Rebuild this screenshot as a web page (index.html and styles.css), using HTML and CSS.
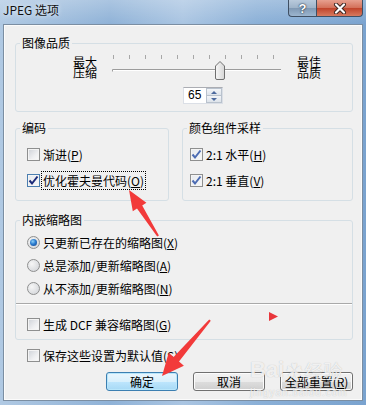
FILE: index.html
```html
<!DOCTYPE html>
<html lang="zh-CN">
<head>
  <meta charset="UTF-8">
  <meta name="viewport" content="width=device-width, initial-scale=1.0">
  <title>JPEG 选项</title>
  <link rel="stylesheet" href="styles.css">
</head>
<body>
  <div class="window">
    <div class="titlebar">
      <span class="title">JPEG 选项</span>
      <div class="caption-buttons">
        <span class="cap-btn help">?</span>
        <span class="cap-btn close">
          <svg width="14" height="11" viewBox="0 0 14 11">
            <path d="M3 1.5 L11 9.5 M11 1.5 L3 9.5" stroke="#3a2420" stroke-width="4" stroke-linecap="round"/>
            <path d="M3 1.5 L11 9.5 M11 1.5 L3 9.5" stroke="#fff" stroke-width="2.2" stroke-linecap="round"/>
          </svg>
        </span>
      </div>
    </div>

    <div class="client">
      <!-- 图像品质 -->
      <fieldset class="group">
        <legend>图像品质</legend>
        <div class="group-body quality-body">
          <div class="slider-row">
            <div class="slider-label">最大<br>压缩</div>
            <svg class="slider" width="170" height="26" viewBox="0 0 170 26">
              <g stroke="#a7a7a7" stroke-width="1">
                <path d="M1.5 1 V5 M17.5 1 V5 M33.5 1 V5 M49.5 1 V5 M65.5 1 V5 M81.5 1 V5 M97.5 1 V5 M113.5 1 V5 M129.5 1 V5 M145.5 1 V5 M161.5 1 V5"/>
              </g>
              <path d="M0.5 17.5 V15.5 H169" stroke="#9c9c9c" fill="none"/>
              <path d="M1 16.5 H169" stroke="#ffffff"/>
              <defs>
                <linearGradient id="thumb" x1="0" y1="0" x2="1" y2="0">
                  <stop offset="0" stop-color="#f7f7f7"/>
                  <stop offset="1" stop-color="#d6d6d6"/>
                </linearGradient>
              </defs>
              <path d="M103.5 24 V12 L108 7.5 L112.5 12 V24 Q112.5 25.5 111 25.5 H105 Q103.5 25.5 103.5 24 Z" fill="url(#thumb)" stroke="#6f6f6f"/>
            </svg>
            <div class="slider-label">最佳<br>品质</div>
          </div>
          <div class="spinbox">
            <span class="spin-value">65</span>
            <span class="spin-buttons">
              <span class="spin-btn"><span class="arrow-up"></span></span>
              <span class="spin-btn"><span class="arrow-down"></span></span>
            </span>
          </div>
        </div>
      </fieldset>

      <div class="group-row">
        <!-- 编码 -->
        <fieldset class="group encoding">
          <legend>编码</legend>
          <div class="group-body option-list">
            <div class="option">
              <span class="check"></span>
              <span class="text">渐进(<u>P</u>)</span>
            </div>
            <div class="option">
              <span class="check checked focused">
                <svg width="11" height="11" viewBox="0 0 11 11"><path d="M1.5 5.5 L4 8.5 L9.5 1.5" stroke="#1c2a78" stroke-width="2" fill="none"/></svg>
              </span>
              <span class="text focus-rect">优化霍夫曼代码(<u>O</u>)</span>
            </div>
          </div>
        </fieldset>

        <!-- 颜色组件采样 -->
        <fieldset class="group sampling">
          <legend>颜色组件采样</legend>
          <div class="group-body option-list">
            <div class="option">
              <span class="check checked">
                <svg width="11" height="11" viewBox="0 0 11 11"><path d="M1.5 5.5 L4 8.5 L9.5 1.5" stroke="#4c6cb3" stroke-width="2" fill="none"/></svg>
              </span>
              <span class="text">2:1 水平(<u>H</u>)</span>
            </div>
            <div class="option">
              <span class="check checked">
                <svg width="11" height="11" viewBox="0 0 11 11"><path d="M1.5 5.5 L4 8.5 L9.5 1.5" stroke="#4c6cb3" stroke-width="2" fill="none"/></svg>
              </span>
              <span class="text">2:1 垂直(<u>V</u>)</span>
            </div>
          </div>
        </fieldset>
      </div>

      <!-- 内嵌缩略图 -->
      <fieldset class="group thumbs">
        <legend>内嵌缩略图</legend>
        <div class="group-body radio-list">
          <div class="option">
            <span class="radio selected"></span>
            <span class="text">只更新已存在的缩略图(<u>X</u>)</span>
          </div>
          <div class="option">
            <span class="radio"></span>
            <span class="text">总是添加/更新缩略图(<u>A</u>)</span>
          </div>
          <div class="option">
            <span class="radio"></span>
            <span class="text">从不添加/更新缩略图(<u>N</u>)</span>
          </div>
        </div>
        <div class="separator"></div>
        <div class="group-body dcf-body">
          <div class="option">
            <span class="check"></span>
            <span class="text">生成 DCF 兼容缩略图(<u>G</u>)</span>
          </div>
        </div>
      </fieldset>

      <div class="option save-option">
        <span class="check"></span>
        <span class="text">保存这些设置为默认值(<u>S</u>)</span>
      </div>

      <div class="button-row">
        <button class="btn default">确定</button>
        <button class="btn">取消</button>
        <button class="btn wide">全部重置(<u>R</u>)</button>
      </div>
    </div>

    <!-- watermark and annotations drawn over the dialog -->
    <div class="watermark">
      <div class="wm-main"><span class="wm-bai">Bai</span><span class="wm-paw">✿</span><span class="wm-jy">经验</span></div>
      <div class="wm-url">jingyan.baidu.com</div>
    </div>
    <svg class="annotations" width="366" height="405" viewBox="0 0 366 405">
      <polygon points="129,190 146.4,202.8 142.2,205.4 158.9,235.5 157.2,236.5 137,208.6 132.8,211.2" fill="#f23a3a"/>
      <polygon points="162,376 168.7,352.8 173.6,357 209.2,319.4 210.8,320.7 179,361.6 183.9,365.8" fill="#f23a3a"/>
      <polygon points="269,312 278,316.5 269,321" fill="#e8363c"/>
    </svg>
  </div>
</body>
</html>
```

FILE: styles.css
```css
body {
  margin: 0;
  background: #8fb2d6;
  font-family: "Noto Sans CJK SC", "Liberation Sans", sans-serif;
  font-size: 12px;
  color: #000;
}

.window {
  position: relative;
  width: 366px;
  height: 405px;
  display: flex;
  flex-direction: column;
  overflow: hidden;
  background: linear-gradient(90deg, #b0c9e3 0%, #8fb2d7 30%, #aac5e2 50%, #8bb0d7 70%, #7aa3cf 100%);
}

/* barra de titulo */
.titlebar {
  height: 24px;
  flex-shrink: 0;
  display: flex;
  align-items: flex-start;
  background: linear-gradient(rgba(255, 255, 255, 0.25), rgba(255, 255, 255, 0));
}

.title {
  padding: 2px 0 0 3px;
  line-height: 16px;
  color: #111;
  text-shadow: 0 0 5px rgba(255, 255, 255, 0.9);
}

.caption-buttons {
  margin-left: auto;
  margin-right: 3px;
  display: flex;
}

.cap-btn {
  box-sizing: border-box;
  height: 17px;
  display: flex;
  align-items: center;
  justify-content: center;
  border: 1px solid #3f4f63;
  border-top: none;
}

.help {
  width: 28px;
  border-right: none;
  border-radius: 0 0 0 4px;
  background: linear-gradient(#b9cadc 0%, #9eb3c9 50%, #7f98b3 51%, #9cb5cf 100%);
  color: #fff;
  font-family: "Liberation Sans", sans-serif;
  font-weight: bold;
  font-size: 13px;
  text-shadow: 0 0 2px #1d2c3e, 0 0 1px #1d2c3e;
}

.close {
  width: 47px;
  border-radius: 0 0 4px 0;
  background: linear-gradient(#e7a08f 0%, #d36f58 50%, #c0432a 51%, #d77a5f 100%);
}

/* area de cliente */
.client {
  box-sizing: border-box;
  height: 377px;
  margin: 0 3px;
  padding: 11px 9px 0 11px;
  border: 1px solid #7b8ea2;
  background: #f0f0f0;
  box-shadow: inset 0 0 0 1px #fbfbfb;
}

.group {
  margin: 0;
  padding: 0;
  min-width: 0;
  border: 1px solid #d5dfe5;
  border-radius: 3px;
}

.group legend {
  margin-left: 4px;
  padding: 0 2px;
  line-height: 14px;
}

.quality-body {
  padding: 4px 0 7px 57px;
}

.slider-row {
  display: flex;
  align-items: center;
  gap: 15px;
  height: 26px;
}

.slider-label {
  width: 24px;
  line-height: 11px;
}

.slider {
  display: block;
}

.spinbox {
  box-sizing: border-box;
  width: 40px;
  height: 17px;
  margin: 7px 0 0 110px;
  display: flex;
  background: #fff;
  border: 1px solid #dbdfe6;
  border-top-color: #abadb3;
}

.spin-value {
  padding-left: 4px;
  line-height: 15px;
  font-family: "Liberation Sans", sans-serif;
  font-size: 12px;
}

.spin-buttons {
  margin-left: auto;
  width: 16px;
  display: flex;
  flex-direction: column;
}

.spin-btn {
  flex: 1;
  display: flex;
  align-items: center;
  justify-content: center;
  border: 1px solid #b9c2cd;
  background: linear-gradient(#f3f5f8, #dde3ea);
}

.spin-btn + .spin-btn {
  border-top: none;
}

.arrow-up {
  border-left: 3px solid transparent;
  border-right: 3px solid transparent;
  border-bottom: 3px solid #4d6a9e;
}

.arrow-down {
  border-left: 3px solid transparent;
  border-right: 3px solid transparent;
  border-top: 3px solid #4d6a9e;
}

.group-row {
  display: flex;
  gap: 13px;
  margin-top: 9px;
}

.encoding {
  width: 154px;
  box-sizing: border-box;
}

.sampling {
  flex: 1;
}

.option-list {
  padding: 9px 0 10px 11px;
  display: flex;
  flex-direction: column;
  gap: 6px;
}

.sampling .option-list {
  padding-left: 7px;
}

.option {
  height: 20px;
  display: flex;
  align-items: center;
}

.option .text {
  margin-left: 3px;
  line-height: 17px;
  white-space: nowrap;
}

.option .focus-rect {
  margin-left: 1px;
  padding: 0 1px;
  border: 1px dotted #000;
}

/* casillas */
.check {
  box-sizing: border-box;
  width: 13px;
  height: 13px;
  flex-shrink: 0;
  border: 1px solid #8e8f8f;
  background: linear-gradient(135deg, #cdd1d7 0%, #eeeff1 60%, #fbfbfb 100%);
  box-shadow: inset 0 0 0 1px #f4f4f4;
}

.check.checked {
  background: linear-gradient(135deg, #e6e9ee 0%, #f7f8f9 100%);
}

.check.focused {
  border-color: #4a7eb0;
}

.check svg {
  display: block;
}

.radio {
  box-sizing: border-box;
  width: 13px;
  height: 13px;
  flex-shrink: 0;
  border-radius: 50%;
  border: 1px solid #8e8f8f;
  background: radial-gradient(circle at 35% 35%, #f6f6f6 0%, #dadcdf 70%, #cfd1d4 100%);
  display: flex;
  align-items: center;
  justify-content: center;
}

.radio.selected::after {
  content: "";
  width: 7px;
  height: 7px;
  border-radius: 50%;
  background: radial-gradient(circle at 40% 35%, #8fd1f7 0%, #2a7cd0 45%, #153f86 100%);
}

.thumbs {
  margin-top: 12px;
}

.radio-list {
  padding: 5px 0 5px 11px;
  display: flex;
  flex-direction: column;
  gap: 3px;
}

.separator {
  height: 1px;
  background: #a9a9a9;
  border-bottom: 1px solid #ffffff;
}

.dcf-body {
  padding: 9px 0 5px 11px;
}

.save-option {
  margin: 5px 0 0 12px;
}

/* botones */
.button-row {
  display: flex;
  justify-content: flex-end;
  gap: 15px;
  margin-top: 7px;
}

.btn {
  box-sizing: border-box;
  width: 72px;
  height: 19px;
  padding: 0;
  font: inherit;
  line-height: 17px;
  color: #000;
  border: 1px solid #707070;
  border-radius: 3px;
  background: linear-gradient(#f2f2f2 0%, #ebebeb 50%, #dddddd 51%, #cfcfcf 100%);
  box-shadow: inset 0 0 0 1px #fcfcfc;
}

.btn.default {
  border-color: #3c7fb1;
  background: linear-gradient(#eaf6fd 0%, #d9f0fc 50%, #bee6fd 51%, #a7d9f5 100%);
  box-shadow: inset 0 0 0 1px #b8e6fb;
}

.btn.wide {
  width: 73px;
}

/* marca de agua y flechas */
.watermark {
  position: absolute;
  left: 250px;
  top: 356px;
  color: rgba(255, 255, 255, 0.8);
  text-shadow: 0 0 1px rgba(110, 110, 110, 0.45);
  pointer-events: none;
}

.wm-main {
  display: flex;
  align-items: center;
  height: 28px;
}

.wm-bai {
  font-family: "Liberation Sans", sans-serif;
  font-weight: bold;
  font-size: 22px;
}

.wm-paw {
  font-size: 16px;
  margin: 0 2px;
}

.wm-jy {
  font-size: 19px;
}

.wm-url {
  font-family: "Liberation Sans", sans-serif;
  font-size: 10px;
  letter-spacing: 1px;
  margin-top: 3px;
}

.annotations {
  position: absolute;
  left: 0;
  top: 0;
  pointer-events: none;
}
```
